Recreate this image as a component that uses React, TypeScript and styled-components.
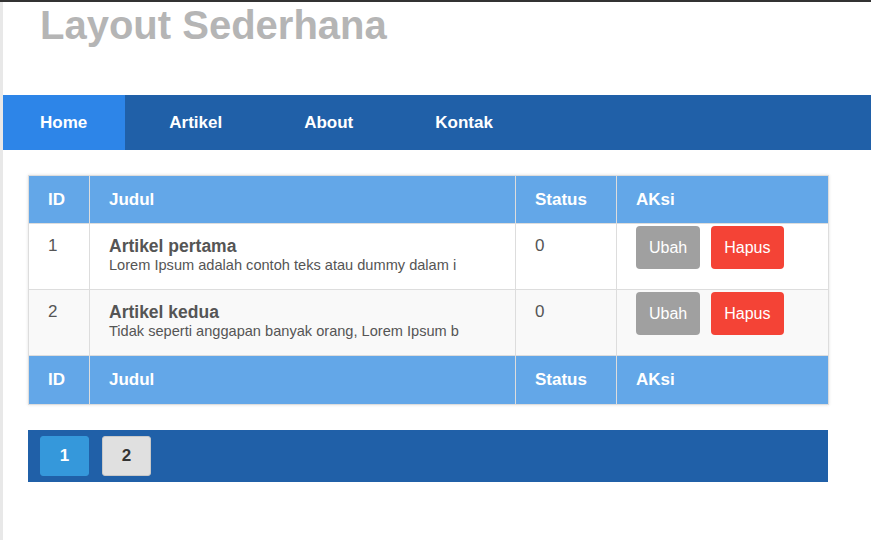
import styled, { createGlobalStyle } from "styled-components";

const Global = createGlobalStyle`
  * { box-sizing: border-box; }
  html, body { margin: 0; padding: 0; background: white; }
  body {
    border-top: 2px solid #333;
    font-family: "Liberation Sans", Arial, sans-serif;
    color: #555;
  }
`

const articles = [
  { id: 1, title: "Artikel pertama", text: "Lorem Ipsum adalah contoh teks atau dummy dalam i", status: 0 },
  { id: 2, title: "Artikel kedua", text: "Tidak seperti anggapan banyak orang, Lorem Ipsum b", status: 0 },
]

const menu = ["Home", "Artikel", "About", "Kontak"]

function App() {
  return <Page>
    <Global/>
    <Header><Title>Layout Sederhana</Title></Header>
    <Nav>
      {menu.map((m, i) => <NavItem key={m} $active={i === 0}>{m}</NavItem>)}
    </Nav>
    <Content>
      <Table>
        <colgroup>
          <col style={{ width: 61 }}/>
          <col style={{ width: 426 }}/>
          <col style={{ width: 101 }}/>
          <col style={{ width: 212 }}/>
        </colgroup>
        <thead>
          <HeadRow><Th>ID</Th><Th>Judul</Th><Th>Status</Th><Th>AKsi</Th></HeadRow>
        </thead>
        <tbody>
          {articles.map((a, i) => <BodyRow key={a.id} $odd={i % 2 === 1}>
            <Td>{a.id}</Td>
            <Td>
              <ArticleTitle>{a.title}</ArticleTitle>
              <ArticleText>{a.text}</ArticleText>
            </Td>
            <Td>{a.status}</Td>
            <ActionCell>
              <Actions>
                <Button $color="#a0a0a0">Ubah</Button>
                <Button $color="#f44336">Hapus</Button>
              </Actions>
            </ActionCell>
          </BodyRow>)}
        </tbody>
        <tfoot>
          <HeadRow><Th $h={49}>ID</Th><Th $h={49}>Judul</Th><Th $h={49}>Status</Th><Th $h={49}>AKsi</Th></HeadRow>
        </tfoot>
      </Table>
      <Pagination>
        <PageButton $active>1</PageButton>
        <PageButton>2</PageButton>
      </Pagination>
    </Content>
  </Page>
}
export default App

const Page = styled.div`
  min-height: calc(100vh - 2px);
  border-left: 3px solid #e8e8e8;
  display: flex;
  flex-direction: column;
`

const Header = styled.header`
  height: 93px;
  padding: 3px 37px 0;
`

const Title = styled.h1`
  margin: 0;
  font: 700 40px/40px "Liberation Sans", Arial, sans-serif;
  color: #b5b5b5;
`

const Nav = styled.nav`
  height: 55px;
  background: #2060a8;
  display: flex;
  gap: 7px;
`

const NavItem = styled.a<{ $active?: boolean }>`
  display: flex;
  align-items: center;
  padding: 0 38px 0 37px;
  font: 700 17px/20px "Liberation Sans", Arial, sans-serif;
  color: white;
  background: ${p => p.$active ? "#2d85e8" : "transparent"};
  cursor: pointer;
`

const Content = styled.main`
  padding: 25px 25px;
  display: flex;
  flex-direction: column;
  gap: 25px;
`

const Table = styled.table`
  width: 800px;
  table-layout: fixed;
  border-collapse: collapse;
  border: 1px solid #ddd;
  box-shadow: 0 0 3px rgba(0, 0, 0, 0.12);
`

const HeadRow = styled.tr`
  background: #63a7e8;
`

const Th = styled.th<{ $h?: number }>`
  height: ${p => p.$h ?? 48}px;
  padding: 0 19px;
  border: 1px solid #ddd;
  text-align: left;
  font: 700 17px/20px "Liberation Sans", Arial, sans-serif;
  color: white;
`

const BodyRow = styled.tr<{ $odd?: boolean }>`
  background: ${p => p.$odd ? "#f9f9f9" : "white"};
`

const Td = styled.td`
  height: 66px;
  padding: 12px 19px;
  border: 1px solid #ddd;
  vertical-align: top;
  font: 400 17px/20px "Liberation Sans", Arial, sans-serif;
  color: #555;
`

const ActionCell = styled(Td)`
  padding: 2px 19px;
`

const ArticleTitle = styled.div`
  font: 700 17.5px/21px "Liberation Sans", Arial, sans-serif;
  color: #555;
`

const ArticleText = styled.div`
  font: 400 14.6px/17px "Liberation Sans", Arial, sans-serif;
  color: #555;
`

const Actions = styled.div`
  display: flex;
  gap: 11px;
`

const Button = styled.button<{ $color: string }>`
  border: none;
  border-radius: 4px;
  height: 43px;
  padding: 0 13px;
  background: ${p => p.$color};
  color: white;
  font: 400 16px/19px "Liberation Sans", Arial, sans-serif;
  cursor: pointer;
`

const Pagination = styled.div`
  width: 800px;
  height: 52px;
  background: #2060a8;
  display: flex;
  align-items: center;
  gap: 13px;
  padding: 0 12px;
`

const PageButton = styled.button<{ $active?: boolean }>`
  width: 49px;
  height: 40px;
  border-radius: 3px;
  border: 1px solid ${p => p.$active ? "#3598db" : "#c8c8c8"};
  background: ${p => p.$active ? "#3598db" : "#e0e0e0"};
  color: ${p => p.$active ? "white" : "#333"};
  font: 700 17px/20px "Liberation Sans", Arial, sans-serif;
  cursor: pointer;
`
